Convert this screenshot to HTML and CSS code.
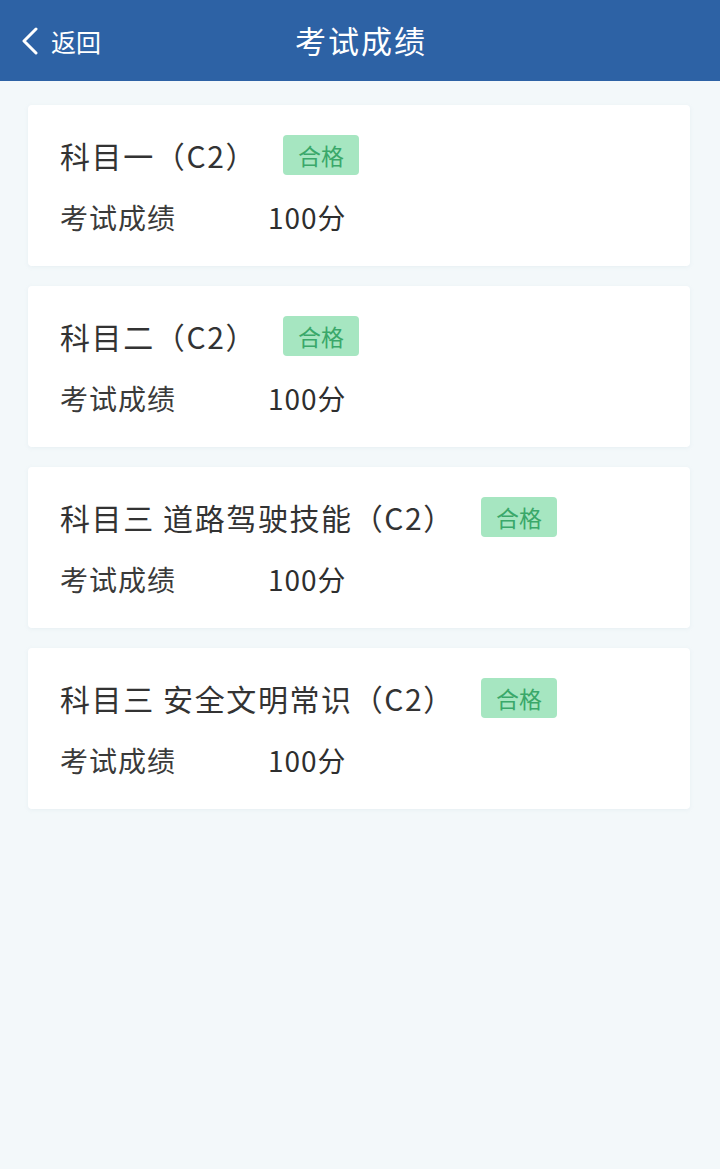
FILE: index.html
```html
<!DOCTYPE html>
<html lang="zh-CN">
<head>
  <meta charset="UTF-8">
  <title>考试成绩</title>
  <link rel="stylesheet" href="styles.css">
</head>
<body>
  <header class="barra">
    <a class="volver" href="#">
      <svg class="flecha" width="18" height="28" viewBox="0 0 18 28">
        <path d="M15 2 L3 14 L15 26" fill="none" stroke="#fff" stroke-width="3" stroke-linecap="round" stroke-linejoin="round"/>
      </svg>
      <span>返回</span>
    </a>
    <h1>考试成绩</h1>
  </header>

  <main class="lista">
    <div class="tarjeta">
      <div class="fila-titulo">
        <span class="materia">科目一（C2）</span>
        <span class="estado">合格</span>
      </div>
      <div class="fila-nota">
        <span class="etiqueta">考试成绩</span>
        <span class="nota">100分</span>
      </div>
    </div>

    <div class="tarjeta">
      <div class="fila-titulo">
        <span class="materia">科目二（C2）</span>
        <span class="estado">合格</span>
      </div>
      <div class="fila-nota">
        <span class="etiqueta">考试成绩</span>
        <span class="nota">100分</span>
      </div>
    </div>

    <div class="tarjeta">
      <div class="fila-titulo">
        <span class="materia">科目三 道路驾驶技能（C2）</span>
        <span class="estado">合格</span>
      </div>
      <div class="fila-nota">
        <span class="etiqueta">考试成绩</span>
        <span class="nota">100分</span>
      </div>
    </div>

    <div class="tarjeta">
      <div class="fila-titulo">
        <span class="materia">科目三 安全文明常识（C2）</span>
        <span class="estado">合格</span>
      </div>
      <div class="fila-nota">
        <span class="etiqueta">考试成绩</span>
        <span class="nota">100分</span>
      </div>
    </div>
  </main>
</body>
</html>
```

FILE: styles.css
```css
body {
  margin: 0;
  padding: 0;
  background-color: #f3f8fa;
  font-family: "Noto Sans CJK SC", "Noto Sans", sans-serif;
  color: #333;
  height: 1169px;
}

.barra {
  height: 81px;
  background-color: #2d62a5;
  display: flex;
  align-items: center;
  justify-content: center;
  position: relative;
}

.barra h1 {
  margin: 0 0 2px;
  color: #fff;
  font-size: 31px;
  font-weight: 400;
  letter-spacing: 2px;
  padding-left: 2px;
}

.volver {
  position: absolute;
  left: 21px;
  top: 23px;
  display: flex;
  align-items: center;
  gap: 12px;
  color: #fff;
  text-decoration: none;
  font-size: 25px;
}

.lista {
  display: flex;
  flex-direction: column;
  gap: 20px;
  padding: 24px 30px 0 28px;
}

.tarjeta {
  background-color: #fff;
  border-radius: 4px;
  box-shadow: 0 1px 4px rgba(150, 180, 190, 0.12);
  padding: 30px 32px 29px;
  display: flex;
  flex-direction: column;
  gap: 22px;
}

.fila-titulo {
  display: flex;
  align-items: center;
  height: 40px;
}

.materia {
  font-size: 30px;
  letter-spacing: 1.6px;
  color: #333;
}

.estado {
  margin-left: 26px;
  width: 76px;
  height: 40px;
  border-radius: 4px;
  background-color: #a6e6c1;
  color: #3aa86a;
  font-size: 23px;
  display: flex;
  align-items: center;
  justify-content: center;
}

.fila-nota {
  display: flex;
  align-items: center;
  height: 40px;
  font-size: 28px;
  letter-spacing: 1px;
}

.etiqueta {
  width: 208px;
  color: #3a3a3a;
}

.nota {
  color: #2e2e2e;
}
```
